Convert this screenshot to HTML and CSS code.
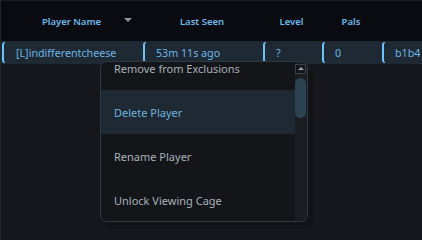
FILE: index.html
```html
<!DOCTYPE html>
<html lang="en">
<head>
  <meta charset="UTF-8" />
  <title>Players</title>
  <link rel="stylesheet" href="styles.css">
</head>
<body>

<div id="table">
  <div class="head">
    <div class="hcell sorted">Player Name<span class="sort"></span></div>
    <div class="hcell">Last Seen</div>
    <div class="hcell">Level</div>
    <div class="hcell">Pals</div>
    <div class="hcell"></div>
  </div>
  <div class="row">
    <div class="cell">[L]indifferentcheese</div>
    <div class="cell">53m 11s ago</div>
    <div class="cell">?</div>
    <div class="cell">0</div>
    <div class="cell">b1b4</div>
  </div>
</div>

<div id="menu">
  <div class="items">
    <div class="item">Remove from Exclusions</div>
    <div class="item hover">Delete Player</div>
    <div class="item">Rename Player</div>
    <div class="item">Unlock Viewing Cage</div>
  </div>
  <div class="scroll">
    <div class="up"></div>
    <div class="thumb"></div>
  </div>
</div>

</body>
</html>
```

FILE: styles.css
```css
body {
  margin: 0; padding: 0;
  font-family: 'Noto Sans', sans-serif;
  background: #15171c;
  color: #a9b3bd;
  width: 422px;
  height: 240px;
  overflow: hidden;
  position: relative;
  border-left: 1px solid #1c2833;
  border-top: 1px solid #1b1e24;
  box-sizing: border-box;
}
#table {
  width: 100%;
}
.head, .row {
  display: grid;
  grid-template-columns: 141px 120px 59px 60px 1fr;
}
.head {
  height: 40px;
  background: #0a0b10;
}
.hcell {
  position: relative;
  display: flex;
  align-items: center;
  justify-content: center;
  font-size: 9.5px;
  font-weight: 600;
  color: #6db9ea;
}
.sort {
  position: absolute;
  right: 10px;
  top: 17px;
  border-left: 4px solid transparent;
  border-right: 4px solid transparent;
  border-top: 4px solid #8c939b;
}
.row {
  height: 23px;
  background: #1e2934;
}
.cell {
  position: relative;
  display: flex;
  align-items: center;
  padding-left: 14px;
  font-size: 10.7px;
  color: #6cb6e6;
  white-space: nowrap;
  overflow: hidden;
}
.cell:first-child {
  padding-left: 15px;
}
.cell::before {
  content: '';
  position: absolute;
  left: 1px;
  top: 1px;
  bottom: 1px;
  width: 3px;
  border: 2px solid #6cc2f4;
  border-right: none;
  border-top-width: 1px;
  border-bottom-width: 1px;
  border-radius: 3px 0 0 3px;
  box-sizing: border-box;
}
#menu {
  position: absolute;
  left: 99px;
  top: 60px;
  width: 208px;
  height: 161px;
  box-sizing: border-box;
  background: #131519;
  border: 1px solid #2b3a46;
  border-radius: 7px;
  display: flex;
  overflow: hidden;
  box-shadow: 6px 7px 0 #111316;
}
.items {
  flex: 1;
  margin-top: -16px;
}
.item {
  height: 44px;
  display: flex;
  align-items: center;
  padding-left: 13px;
  font-size: 11px;
  color: #a7b1bb;
}
.item.hover {
  background: #1e2933;
  color: #6cb2df;
}
.scroll {
  width: 12px;
  background: #1a1d21;
  position: relative;
}
.up {
  margin: 2px 1px 0 0;
  height: 10px;
  border: 1px solid #3a4148;
  background: #15171b;
  box-sizing: border-box;
  position: relative;
}
.up::after {
  content: '';
  position: absolute;
  left: 2px;
  top: 2px;
  border-left: 3px solid transparent;
  border-right: 3px solid transparent;
  border-bottom: 3px solid #a0a6ac;
}
.thumb {
  margin: 4px 1px 0 0;
  height: 40px;
  border-radius: 6px;
  background: #2c4251;
}
```
